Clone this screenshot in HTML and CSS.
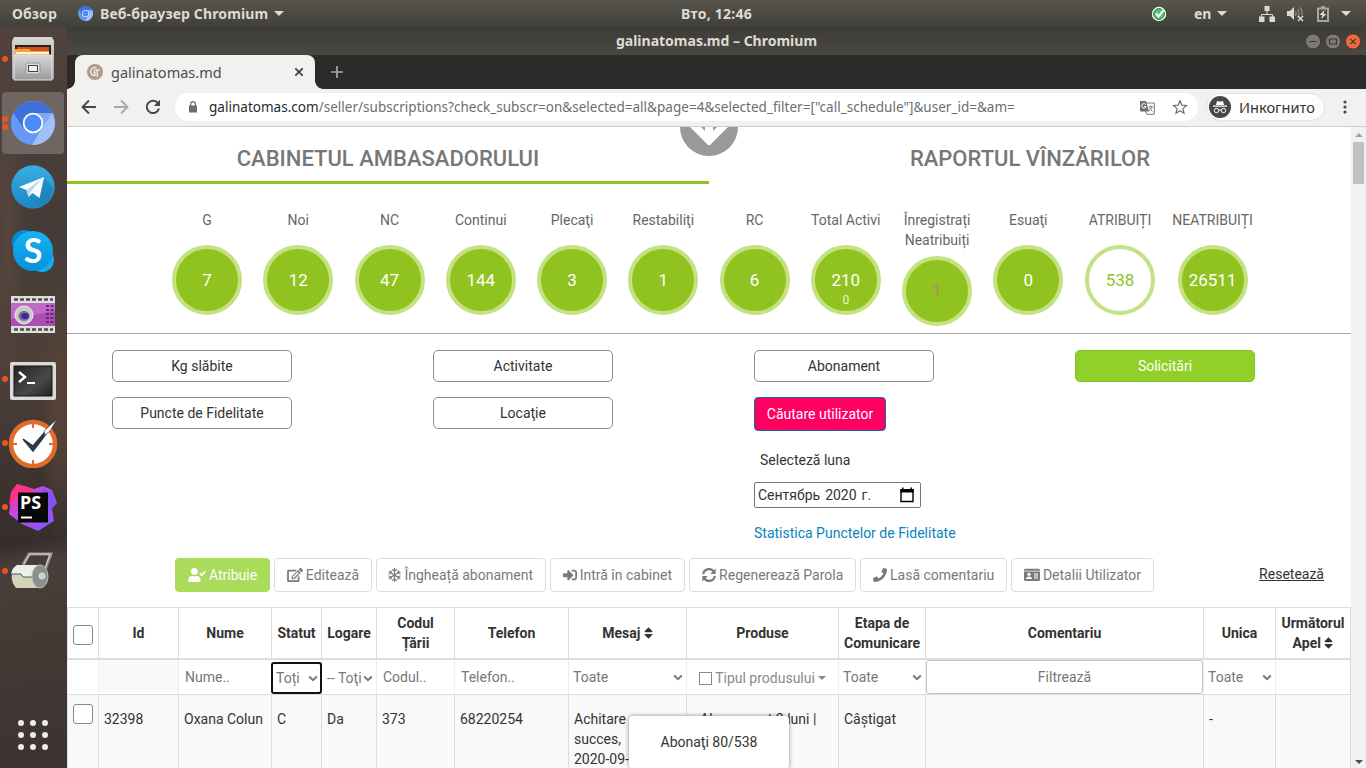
FILE: index.html
```html
<!DOCTYPE html>
<html lang="ro">
<head>
<meta charset="utf-8">
<title>galinatomas.md</title>
<link rel="stylesheet" href="styles.css">
</head>
<body>
<svg width="0" height="0" class="defs">
  <defs>
    <symbol id="chromium" viewBox="0 0 44 44">
      <circle cx="22" cy="22" r="22" fill="#6698f7"/>
      <path d="M2.500 12A22 22 0 0 1 41.500 12H22L12.500 27.500Z" fill="#3f6fd8"/>
      <path d="M41.500 12A22 22 0 0 1 21 44L31 27 32 12Z" fill="#9fc1fa"/>
      <path d="M22 12H41.500L31 27Z" fill="#7ea9f3"/>
      <circle cx="22" cy="22" r="10.300" fill="#fff"/>
      <circle cx="22" cy="22" r="8.500" fill="#4b8bf5"/>
    </symbol>
    <symbol id="sort" viewBox="0 0 320 512"><path fill="currentColor" d="M41 288h238c21.400 0 32.100 25.900 17 41L177 448c-9.400 9.400-24.600 9.400-33.900 0L24 329c-15.100-15.100-4.400-41 17-41zm255-105L177 64c-9.400-9.400-24.600-9.400-33.900 0L24 183c-15.100 15.100-4.400 41 17 41h238c21.400 0 32.100-25.900 17-41z"/></symbol>
    <symbol id="chev" viewBox="0 0 10 7"><path d="M1.200 1.500 5 5.200 8.800 1.500" fill="none" stroke="currentColor" stroke-width="2"/></symbol>
    <symbol id="tri" viewBox="0 0 10 5"><path d="M0 0H10L5 5Z" fill="currentColor"/></symbol>
    <linearGradient id="metal" x1="0" y1="0" x2="0" y2="1"><stop offset="0" stop-color="#d8d8d8"/><stop offset="1" stop-color="#9b9b9b"/></linearGradient>
    <linearGradient id="term" x1="0" y1="0" x2="1" y2="1"><stop offset="0" stop-color="#222"/><stop offset=".6" stop-color="#484848"/><stop offset="1" stop-color="#222"/></linearGradient>
    <linearGradient id="tele" x1="0" y1="0" x2="0" y2="1"><stop offset="0" stop-color="#37aee2"/><stop offset="1" stop-color="#1c87c3"/></linearGradient>
    <linearGradient id="sky" x1="0" y1="0" x2="0" y2="1"><stop offset="0" stop-color="#14b5f2"/><stop offset="1" stop-color="#0790dd"/></linearGradient>
    <linearGradient id="pst" x1="0" y1="0" x2="1" y2="1"><stop offset="0" stop-color="#ff318c"/><stop offset=".4" stop-color="#c04be8"/><stop offset="1" stop-color="#765af8"/></linearGradient>
  </defs>
</svg>

<header class="topbar">
  <span class="overview">Обзор</span>
  <svg class="app-icon" width="15" height="15"><use href="#chromium"/></svg>
  <span class="app-name">Веб-браузер Chromium</span>
  <svg class="app-arrow" width="10" height="5"><use href="#tri"/></svg>
  <span class="clock">Вто, 12:46</span>
  <div class="tray">
    <svg class="t-check" width="16" height="16" viewBox="0 0 16 16"><circle cx="8" cy="8" r="7.200" fill="#fff"/><circle cx="8" cy="8" r="5.400" fill="#4fc878" stroke="#257a43"/><path d="M5 7.500 7.500 10.500 12.500 4.500" fill="none" stroke="#fff" stroke-width="2"/></svg>
    <span class="lang">en</span>
    <svg class="t-lang" width="10" height="5"><use href="#tri"/></svg>
    <svg class="t-net" width="16" height="16" viewBox="0 0 16 16"><path d="M5.500 0h5v5h-5zM0 10.500h5.500V16H0zM10.500 10.500H16V16h-5.500z" fill="#dcd9d0"/><path d="M8 5v3.500M2.500 11V8.500h11V11" fill="none" stroke="#dcd9d0"/></svg>
    <svg class="t-vol" width="17" height="16" viewBox="0 0 17 16"><path d="M0 5h3l4-4v13l-4-4H0z" fill="#dcd9d0"/><path d="M8.500 5q1.500 2.500 0 5M10.500 3q3 4.500 0 9M13 1.500q3 4 2 8" fill="none" stroke="#8b8981" stroke-width="1.300"/><path d="m11 10 5 5m0-5-5 5" stroke="#dcd9d0" stroke-width="1.600"/></svg>
    <svg class="t-bat" width="12" height="16" viewBox="0 0 12 16"><path d="M1 2.500h10V15H1z" fill="none" stroke="#a8a59c" stroke-width="2"/><path d="M4 0h4v2H4z" fill="#a8a59c"/><path d="M7.500 4 2.500 9h3L4 13 9.500 8h-3z" fill="#e5e2da"/></svg>
    <svg width="10" height="5"><use href="#tri"/></svg>
  </div>
</header>

<div class="desk">
  <nav class="dock">
    <div class="slot run"><svg width="44" height="46" viewBox="0 0 44 46"><path d="M3 1h38l2 4v38H1V5Z" fill="url(#metal)"/><path d="M4 9h36v11H4z" fill="#222"/><path d="M6 11h32v9H6z" fill="#d2521c"/><path d="M4 13h14l2 2h18v6H4z" fill="#f7a13a"/><path d="M5 16h33v2H5z" fill="#fff2df"/><path d="M3 19h38v25H3z" fill="url(#metal)" stroke="#e4e4e4"/><rect x="15" y="27" width="14" height="11" rx="2" fill="#ddd" stroke="#999"/><rect x="17.500" y="29.500" width="9" height="6" fill="#eee" stroke="#444"/></svg></div>
    <div class="slot run twice active"><svg width="44" height="44"><use href="#chromium"/></svg></div>
    <div class="slot"><svg width="44" height="44" viewBox="0 0 44 44"><circle cx="22" cy="22" r="21.700" fill="url(#tele)"/><path d="m27 35 7-21 8 8A21 21 0 0 1 30 42L18 31Z" fill="#1878ad" opacity=".45"/><path d="M8 22 33 12 28.500 33 21.500 28 17.500 32 15.500 25Z" fill="#f7fbfe"/><path d="m15.500 25 15-11-11 13-2 5Z" fill="#bcd7e8"/></svg></div>
    <div class="slot"><svg width="44" height="44" viewBox="0 0 44 44"><circle cx="13" cy="13" r="12" fill="#0a8bd6"/><circle cx="31" cy="31" r="12" fill="#14aee9"/><circle cx="22" cy="22" r="20" fill="url(#sky)"/><text x="22" y="34" class="skype-s">S</text></svg></div>
    <div class="slot"><svg width="44" height="40" viewBox="0 0 44 40"><path d="M0 1h44v37H0z" fill="#dededb"/><path d="M0 8h44v23H0z" fill="#a950b1"/><path d="M0 8h44v8L0 24z" fill="#c06bc7"/><path d="M3 4.500h39M3 34.500h39" stroke="#4f4b48" stroke-width="2.500" stroke-dasharray="4 2"/><circle cx="13" cy="20" r="9" fill="#c9c9c9" stroke="#eee"/><ellipse cx="13" cy="21" rx="5.500" ry="5" fill="#777"/><ellipse cx="14" cy="21" rx="4" ry="3" fill="#4421b2"/><path d="M36.500 10v19M41 10v19" stroke="#70257a" stroke-width="3" stroke-dasharray="2 2"/></svg></div>
    <div class="slot run terminal"><svg width="46" height="38" viewBox="0 0 46 38"><rect width="46" height="38" rx="2" fill="#dadad8"/><path d="M4 4h38v30H4z" fill="url(#term)" stroke="#111"/><path d="m9 10 6 5-6 5" fill="none" stroke="#fff" stroke-width="2.500"/><path d="M17 21h8" stroke="#fff" stroke-width="2"/></svg></div>
    <div class="slot run"><svg width="50" height="50" viewBox="0 0 50 50"><circle cx="25" cy="26" r="22" fill="#fff" stroke="#df6c2b" stroke-width="4.500"/><path d="M25 6v4M25 42v4M5 26h4M41 26h4" stroke="#df6c2b" stroke-width="2"/><path d="m15 21 10 7L48 1 35 20 25 33Z" fill="#2d384a" stroke="#2d384a" stroke-width="1.500"/><path d="M36 13 49 1 42 13 37 17Z" fill="#fff" stroke="#333" stroke-width=".6"/></svg></div>
    <div class="slot run"><svg width="50" height="48" viewBox="0 0 50 48"><path d="M9 1 26 6 35 3 44 7 49 20 44 25 46 38 30 48 14 41 1 31 4 9Z" fill="url(#pst)"/><path d="M9 1 26 6 8 16 1 22 3 9Z" fill="#ff3186"/><path d="m34 5 10 4 4 12-9 10Z" fill="#8154ef"/><path d="M10 9.500h30v30H10z" fill="#080808"/><text x="12" y="25.500" class="ps-text">PS</text><path d="M13 34.500h11" stroke="#fff" stroke-width="2"/></svg></div>
    <div class="slot run"><svg width="46" height="40" viewBox="0 0 46 40"><path d="M13 14 19 3h22L33 24" fill="none" stroke="#8f9390" stroke-width="3"/><path d="M14 13 20 3h20L33 23" fill="none" stroke="#d7dad7"/><path d="M7 15h24v22H6Q-3 26 7 15Z" fill="#d4d4bd"/><path d="M7 14h24v12H13l-2-3H1Q2 17 7 14Z" fill="#eceeeb"/><path d="M1 23h10l2 3h13" fill="none" stroke="#555"/><ellipse cx="30" cy="25.500" rx="8" ry="11.500" fill="#8a8e8c" stroke="#b8bcb9"/><circle cx="32" cy="25" r="3.500" fill="#cfd2cf"/></svg></div>
    <div class="launcher"><i></i><i></i><i></i><i></i><i></i><i></i><i></i><i></i><i></i></div>
  </nav>

  <section class="window">
    <div class="titlebar">
      <span>galinatomas.md – Chromium</span>
      <div class="win-controls">
        <svg width="56" height="17" viewBox="0 0 56 17"><circle cx="8" cy="8.500" r="7.600" fill="#7c7a73" stroke="#393833"/><circle cx="28" cy="8.500" r="7.600" fill="#7c7a73" stroke="#393833"/><circle cx="48" cy="8.500" r="7.600" fill="#ec6a3e" stroke="#5a3022"/><path d="M4.500 8.500h7M24.500 6h7v5h-7zM45.300 5.800l5.400 5.400m0-5.400-5.400 5.400" fill="none" stroke="#3a3833" stroke-width="1.200"/></svg>
      </div>
    </div>
    <div class="tabs">
      <div class="tab">
        <svg width="16" height="16" viewBox="0 0 16 16"><circle cx="8" cy="8" r="8" fill="#b29a8c"/><path d="M9.500 4A4 4 0 1 0 8 11.500V8H6M7 6h6M10.200 6v7" fill="none" stroke="#fff" stroke-width="1.100"/></svg>
        <span>galinatomas.md</span>
        <svg class="close" width="10" height="10" viewBox="0 0 10 10"><path d="m1.300 1.300 7.400 7.400m0-7.400L1.300 8.700" stroke="#3d4043" stroke-width="1.700"/></svg>
      </div>
      <svg class="newtab" width="12" height="12" viewBox="0 0 12 12"><path d="M6 0v12M0 6h12" stroke="#a8a8a5" stroke-width="1.700"/></svg>
    </div>
    <div class="toolbar">
      <svg width="16" height="16" viewBox="0 0 16 16"><path d="M15 8H2M8 1.500 1.500 8 8 14.500" fill="none" stroke="#45474a" stroke-width="1.900"/></svg>
      <svg class="fwd" width="16" height="16" viewBox="0 0 16 16"><path d="M1 8h13M8 1.500 14.500 8 8 14.500" fill="none" stroke="#a9a9a8" stroke-width="1.900"/></svg>
      <svg class="reload" width="16" height="16" viewBox="0 0 16 16"><path d="M13 4.200A6.200 6.200 0 1 0 14 9.500" fill="none" stroke="#45474a" stroke-width="2"/><path d="M15 .8V7H8.800Z" fill="#45474a"/></svg>
      <div class="omnibox">
        <svg class="lock" width="8" height="12" viewBox="0 0 8 12"><path d="M0 4.500h8V11.500H0z" fill="#6a6d71"/><path d="M1.700 5V3a2.300 2.300 0 0 1 4.600 0v2" fill="none" stroke="#6a6d71" stroke-width="1.200"/></svg>
        <span class="url"><b>galinatomas.com</b>/seller/subscriptions?check_subscr=on&amp;selected=all&amp;page=4&amp;selected_filter=["call_schedule"]&amp;user_id=&amp;am=</span>
        <svg class="translate" width="15" height="15" viewBox="0 0 15 15"><path d="M6 3h8.300v11.300H7L5 11" fill="#fff" stroke="#77797c"/><path d="M0 1h6l3 10.500H1L0 11z" fill="#707174"/><path d="M5.800 4.700A2.200 2.200 0 1 0 6 6.600H4" fill="none" stroke="#fff"/><path d="M8.500 7H13M10.500 5.500V7M12 7q-1 3-3 4M9.500 8.500l3 3" fill="none" stroke="#77797c"/></svg>
        <svg class="star" width="16" height="16" viewBox="0 0 16 16"><path d="m8 1.800 1.800 4.300 4.700.4-3.600 3.100 1.100 4.600L8 11.800l-4 2.400 1.100-4.600L1.500 6.500l4.700-.4Z" fill="none" stroke="#6a6d71" stroke-width="1.200"/></svg>
      </div>
      <div class="incognito">
        <svg width="22" height="22" viewBox="0 0 22 22"><circle cx="11" cy="11" r="11" fill="#47484b"/><path d="M7 9 8 5q3 1 6 0l1 4zM4 9.500h14v1.200H4z" fill="#fff"/><circle cx="7.500" cy="14.500" r="2.200" fill="none" stroke="#fff"/><circle cx="14.500" cy="14.500" r="2.200" fill="none" stroke="#fff"/><path d="M9.700 14h2.600" stroke="#fff"/></svg>
        <span>Инкогнито</span>
      </div>
      <svg class="dots" width="4" height="14" viewBox="0 0 4 14"><g fill="#45474a"><circle cx="2" cy="2" r="1.600"/><circle cx="2" cy="7" r="1.600"/><circle cx="2" cy="12" r="1.600"/></g></svg>
    </div>

    <div class="viewport">
      <main class="page">
        <div class="cabinet-tabs"><h2 class="on">CABINETUL AMBASADORULUI</h2><h2>RAPORTUL VÎNZĂRILOR</h2></div>
        <svg class="scroll-down" width="58" height="29" viewBox="0 0 58 29"><circle cx="29" cy="0" r="29" fill="#999"/><path d="M10 0H21L25 4V0H33V4L37 0H48L30.500 17.500Q29 19 27.500 17.500Z" fill="#fff"/></svg>

        <div class="stats">
          <div class="stat"><span>G</span><b>7</b></div>
          <div class="stat"><span>Noi</span><b>12</b></div>
          <div class="stat"><span>NC</span><b>47</b></div>
          <div class="stat"><span>Continui</span><b>144</b></div>
          <div class="stat"><span>Plecaţi</span><b>3</b></div>
          <div class="stat"><span>Restabiliţi</span><b>1</b></div>
          <div class="stat"><span>RC</span><b>6</b></div>
          <div class="stat"><span>Total Activi</span><b>210<small>0</small></b></div>
          <div class="stat muted"><span>Înregistrați Neatribuiți</span><b>1</b></div>
          <div class="stat"><span>Esuaţi</span><b>0</b></div>
          <div class="stat hollow"><span>ATRIBUIȚI</span><b>538</b></div>
          <div class="stat"><span>NEATRIBUIȚI</span><b>26511</b></div>
        </div>

        <div class="filters">
          <div class="fcol"><a class="fbtn">Kg slăbite</a><a class="fbtn">Puncte de Fidelitate</a></div>
          <div class="fcol"><a class="fbtn">Activitate</a><a class="fbtn">Locaţie</a></div>
          <div class="fcol">
            <a class="fbtn">Abonament</a>
            <a class="search-user">Căutare utilizator</a>
            <label class="month-label">Selecteză luna</label>
            <div class="month"><span>Сентябрь</span><span>2020</span><span>г.</span><svg width="14" height="16" viewBox="0 0 14 16"><path d="M1 3h12v11.500H1z" fill="none" stroke="#000" stroke-width="1.400"/><path d="M.3 2h13.400v3.500H.3zM2 .5h1.500V3H2zM10.500.5H12V3h-1.500z"/></svg></div>
            <a class="stat-link">Statistica Punctelor de Fidelitate</a>
          </div>
          <div class="fcol"><a class="fbtn green">Solicitări</a></div>
        </div>

        <div class="actions">
          <a class="act primary w1"><svg width="18" height="14" viewBox="0 0 640 512"><path fill="currentColor" d="M224 256c70.700 0 128-57.300 128-128S294.700 0 224 0 96 57.300 96 128s57.300 128 128 128zm89.600 32h-16.700c-22.200 10.200-46.900 16-72.900 16s-50.600-5.800-72.900-16h-16.700C60.200 288 0 348.200 0 422.400V464c0 26.500 21.500 48 48 48h352c26.500 0 48-21.500 48-48v-41.600c0-74.200-60.200-134.400-134.400-134.400z"/><path d="m420 190 70 75 135-140" fill="none" stroke="currentColor" stroke-width="62"/></svg>Atribuie</a>
          <a class="act w2"><svg width="16" height="14" viewBox="0 0 576 512"><path fill="currentColor" d="M402.600 83.200l90.200 90.200c3.800 3.800 3.800 10 0 13.800L274.400 405.600l-92.800 10.300c-12.400 1.400-22.900-9.100-21.500-21.500l10.300-92.800L388.800 83.200c3.800-3.800 10-3.800 13.800 0zm162-22.900l-48.800-48.800c-15.200-15.200-39.900-15.200-55.200 0l-35.400 35.400c-3.800 3.800-3.800 10 0 13.800l90.200 90.200c3.800 3.800 10 3.800 13.800 0l35.400-35.400c15.200-15.300 15.200-40 0-55.200zM384 346.200V448H64V128h229.800c3.200 0 6.200-1.300 8.500-3.500l40-40c7.600-7.600 2.200-20.500-8.500-20.500H48C21.500 64 0 85.500 0 112v352c0 26.500 21.500 48 48 48h352c26.500 0 48-21.500 48-48V306.200c0-10.700-12.900-16-20.500-8.500l-40 40c-2.200 2.300-3.500 5.300-3.500 8.500z"/><path d="M215 355 405 165" stroke="#fff" stroke-width="62"/></svg>Editează</a>
          <a class="act w3"><svg width="13" height="14" viewBox="0 0 13 14"><path d="M6.500 0v14M.7 3.500l11.600 7M12.300 3.500l-11.600 7M4.300 1.200l2.200 2 2.200-2M4.300 12.800l2.200-2 2.200 2M.5 6l2.800-.8L2.700 2.300M12.500 6l-2.800-.8.600-2.900M.5 8l2.800.8-.6 2.900M12.500 8l-2.800.8.600 2.900" fill="none" stroke="currentColor" stroke-width="1.150"/></svg>Îngheață abonament</a>
          <a class="act w4"><svg width="14" height="14" viewBox="0 0 512 512"><path fill="currentColor" d="M416 448h-84c-6.600 0-12-5.400-12-12v-40c0-6.600 5.400-12 12-12h84c17.700 0 32-14.300 32-32V160c0-17.700-14.300-32-32-32h-84c-6.600 0-12-5.400-12-12V76c0-6.600 5.400-12 12-12h84c53 0 96 43 96 96v192c0 53-43 96-96 96zm-47-201L201 79c-15-15-41-4.500-41 17v96H24c-13.300 0-24 10.700-24 24v96c0 13.300 10.700 24 24 24h136v96c0 21.500 26 32 41 17l168-168c9.300-9.400 9.300-24.600 0-34z"/></svg>Intră în cabinet</a>
          <a class="act w5"><svg width="14" height="14" viewBox="0 0 14 14"><path d="M1.200 6.200A5.800 5.800 0 0 1 11.500 3.300M12.800 7.800A5.800 5.800 0 0 1 2.500 10.700" fill="none" stroke="currentColor" stroke-width="2.200"/><path d="M13.700.5V6H8.200ZM.3 13.500V8h5.500Z" fill="currentColor"/></svg>Regenerează Parola</a>
          <a class="act w6"><svg width="14" height="14" viewBox="0 0 512 512"><path fill="currentColor" d="M493.400 24.600l-104-24c-11.300-2.600-22.900 3.300-27.500 13.900l-48 112c-4.200 9.800-1.400 21.300 6.900 28l60.600 49.600c-36 76.700-98.900 140.500-177.200 177.200l-49.600-60.600c-6.800-8.300-18.200-11.100-28-6.900l-112 48C3.900 366.500-2 378.100.6 389.400l24 104C27.100 504.200 36.700 512 48 512c256.100 0 464-207.500 464-464 0-11.200-7.700-20.900-18.600-23.400z"/></svg>Lasă comentariu</a>
          <a class="act w7"><svg width="16" height="14" viewBox="0 0 16 14"><path fill="currentColor" d="M1 .8h14l1 1v.9H0v-.9zM0 3.600h16V12l-1 1H1l-1-1z"/><circle cx="5" cy="6.300" r="1.600" fill="#fff"/><path d="M2 11q0-2.500 3-2.500T8 11zM10 5.500h4v1h-4zM10 7.500h4v1h-4zM10 9.500h4v1h-4z" fill="#fff"/></svg>Detalii Utilizator</a>
          <a class="reset">Resetează</a>
        </div>

        <div class="grid head">
          <div><i class="cb"></i></div><div>Id</div><div>Nume</div><div>Statut</div><div>Logare</div><div>Codul<br>Țării</div><div>Telefon</div><div><span>Mesaj <svg width="9" height="14"><use href="#sort"/></svg></span></div><div>Produse</div><div>Etapa de<br>Comunicare</div><div>Comentariu</div><div>Unica</div><div><span>Următorul<br>Apel <svg width="9" height="14"><use href="#sort"/></svg></span></div>
        </div>
        <div class="grid filter">
          <div></div><div class="dim"></div><div class="inp">Nume..</div>
          <div class="sel focus"><span>Toți</span><svg width="10" height="7"><use href="#chev"/></svg></div>
          <div class="sel log"><span>-- Toţi</span><svg width="10" height="7"><use href="#chev"/></svg></div>
          <div class="inp">Codul..</div><div class="inp">Telefon..</div>
          <div class="sel"><span>Toate</span><svg width="10" height="7"><use href="#chev"/></svg></div>
          <div class="type"><i></i>Tipul produsului<svg width="8" height="4"><use href="#tri"/></svg></div>
          <div class="sel"><span>Toate</span><svg width="10" height="7"><use href="#chev"/></svg></div>
          <div class="comm"><span>Filtrează</span></div>
          <div class="sel"><span>Toate</span><svg width="10" height="7"><use href="#chev"/></svg></div>
          <div></div>
        </div>
        <div class="grid row">
          <div><i class="cb"></i></div><div>32398</div><div>Oxana Colun</div><div>C</div><div>Da</div><div>373</div><div>68220254</div><div>Achitare<br>succes,<br>2020-09-</div><div class="prod">Abonament 2 luni |</div><div>Câștigat</div><div></div><div>-</div><div></div>
        </div>
        <div class="toast">Abonaţi 80/538</div>
      </main>
      <div class="scrollbar"><svg width="8" height="4" viewBox="0 0 8 4"><path d="M0 4h8L4 0z" fill="#a3a3a3"/></svg><i></i><svg class="down" width="8" height="4" viewBox="0 0 8 4"><path d="M0 0h8L4 4z" fill="#505050"/></svg></div>
    </div>
  </section>
</div>
</body>
</html>
```
FILE: styles.css
```css
* { box-sizing: border-box; }
body { margin: 0; width: 1366px; height: 768px; overflow: hidden; font: 14px/20px Roboto, sans-serif; color: #333; background: #fff; }
svg { display: block; flex: none; }
.defs { position: absolute; }

/* system bar */
.topbar { position: relative; height: 27px; display: flex; align-items: center; padding-left: 12px; background: linear-gradient(#58554c, #403f3a); color: #dfdbd2; font: bold 14px/27px "Noto Sans", sans-serif; white-space: nowrap; }
.overview { width: 66px; letter-spacing: .1px; }
.app-icon { margin-right: 7px; }
.app-name { width: 168px; letter-spacing: .12px; }
.app-arrow { margin-left: 6px; }
.clock { position: absolute; left: 681px; top: 0; font-size: 14px; letter-spacing: .25px; }
.tray { margin-left: auto; display: flex; align-items: center; padding-right: 15px; }
.t-check { margin-right: 27px; }
.lang { width: 17px; }
.t-lang { margin: 0 31px 0 6px; }
.t-net { margin-right: 12px; }
.t-vol { margin-right: 13px; }
.t-bat { margin-right: 12px; }
.topbar .t-lang { margin-right: 32px; }

.desk { display: flex; height: 741px; }

/* dock */
.dock { width: 67px; flex: none; padding: 1px 3px 0 2px; background: radial-gradient(ellipse at 90% 52%, #594437 0, transparent 25%), radial-gradient(ellipse at 10% 28%, #57463f 0, transparent 22%), linear-gradient(170deg, #51423d 0, #453b37 28%, #4d4039 45%, #3a322f 62%, #362e2b 69%, #4a3e3a 72%, #443835 85%, #3c3330 100%); }
.slot { position: relative; height: 62px; margin-bottom: 2px; border-radius: 4px; display: flex; align-items: center; justify-content: center; }
.slot.active { background: #706661; }
.slot.terminal { padding-top: 3px; }
.slot.run::before { content: ""; position: absolute; left: 0; top: 28px; width: 6px; height: 6px; border-radius: 50%; background: #e95420; }
.slot.twice::before { top: 24px; box-shadow: 0 8px #e95420; }
.skype-s { font: bold 34px Lato, sans-serif; fill: #fff; text-anchor: middle; }
.ps-text { font: bold 18px "Noto Sans", sans-serif; fill: #fff; }
.launcher { width: 30px; margin: 118px auto 0; display: grid; grid-template-columns: repeat(3, 6px); gap: 6px; }
.launcher i { width: 6px; height: 6px; border-radius: 50%; background: #eeeceb; }

/* browser chrome */
.window { width: 1299px; flex: none; display: flex; flex-direction: column; background: #fff; }
.titlebar { position: relative; height: 28px; background: linear-gradient(#3d3c37, #4a4842); color: #dfdbd2; text-align: center; font: bold 14px/28px "Noto Sans", sans-serif; }
.win-controls { position: absolute; right: 5px; top: 6px; width: 56px; }
.tabs { height: 34px; display: flex; align-items: center; background: #2b2b29; padding-left: 8px; }
.tab { position: relative; width: 240px; height: 34px; display: flex; align-items: center; padding: 0 11px 0 12px; border-radius: 8px 8px 0 0; background: #f2f1f0; color: #4c4c4c; font: 14.500px/18px "Noto Sans", sans-serif; }
.tab::before, .tab::after { content: ""; position: absolute; bottom: 0; width: 8px; height: 8px; }
.tab::before { left: -8px; background: radial-gradient(circle at 0 0, transparent 7.500px, #f2f1f0 8px); }
.tab::after { right: -8px; background: radial-gradient(circle at 100% 0, transparent 7.500px, #f2f1f0 8px); }
.tab span { margin: -1px 0 0 8px; }
.close { margin-left: auto; }
.newtab { margin-left: 16px; }
.toolbar { height: 38px; display: flex; align-items: center; padding: 0 19px 1px 14px; background: #f2f1f0; border-bottom: 1px solid #cfcecd; }
.fwd { margin-left: 16px; }
.reload { margin: 0 14px 0 16px; }
.omnibox { width: 1023px; height: 28px; flex: none; display: flex; align-items: center; padding: 0 10px 0 14px; background: #fff; border-radius: 14px; font: 13.500px "Noto Sans", sans-serif; }
.url { margin-left: 12px; color: #6b6e72; white-space: nowrap; letter-spacing: .02px; }
.url b { font-weight: 400; color: #292a2d; }
.translate { margin-left: auto; }
.star { margin-left: 17px; }
.incognito { width: 119px; height: 28px; flex: none; margin-left: 8px; display: flex; align-items: center; padding-left: 2px; border: 1px solid #e2e1df; border-radius: 14px; background: #fdfdfc; font: 14.600px "Noto Sans", sans-serif; color: #333; }
.incognito span { margin-left: 8px; }
.dots { margin-left: auto; }

.viewport { display: flex; height: 641px; }
.page { position: relative; width: 1284px; flex: none; overflow: hidden; }
.scrollbar { position: relative; width: 15px; background: #f1f1f1; display: flex; flex-direction: column; align-items: center; padding: 6px 0 4px; }
.scrollbar i { width: 11px; height: 42px; margin-top: 5px; background: #c1c1c1; }
.scrollbar .down { margin-top: auto; }

/* heading tabs */
.cabinet-tabs { display: flex; height: 57px; }
.cabinet-tabs h2 { width: 642px; margin: 0; text-align: center; font-size: 22px; line-height: 64px; font-weight: 500; color: #777; }
.cabinet-tabs .on { border-bottom: 3px solid #90c31f; }
.scroll-down { position: absolute; left: 613px; top: 0; }

.stats { display: grid; grid-template-columns: repeat(10, 91.250px) 92.200px 93px; padding: 26px 0 0 94.400px; height: 150px; border-bottom: 1px solid #a6a6a6; }
.stat { display: flex; flex-direction: column; align-items: center; color: #666; text-align: center; }
.stat span { min-height: 29px; margin-bottom: 6px; max-width: 90px; }
.stat b { position: relative; width: 70px; height: 70px; border-radius: 50%; border: 4px solid #c4e282; background: #90c31f; color: #fff; font: 17px/62px Roboto, sans-serif; }
.stat small { position: absolute; left: 0; right: 0; top: 39px; font-size: 12px; line-height: 24px; color: #e8f3cf; }
.stat.muted b { color: #ad8b5f; }
.stat.hollow b { background: #fff; color: #90c31f; }

.filters { display: grid; grid-template-columns: repeat(4, 321px); padding: 16px 0 0 45px; height: 224px; width: 1400px; }
.fcol { display: flex; flex-direction: column; align-items: flex-start; }
.fbtn { width: 180px; height: 32px; margin-bottom: 15px; border: 1px solid #8c8c8c; border-radius: 5px; text-align: center; line-height: 30px; }
.fbtn.green { background: #90d029; border-color: #7fc41c; color: #fff; }
.search-user { width: 132px; height: 34px; border: 1px solid #0c70a5; border-radius: 4px; background: #ff0060; color: #fff; text-align: center; line-height: 32px; }
.month-label { margin: 19px 0 12px 6px; }
.month { width: 167px; height: 26px; display: flex; align-items: center; gap: 5px; padding: 0 6px 0 3px; border: 1px solid #767676; border-radius: 2px; white-space: nowrap; }
.month svg { margin-left: auto; }
.stat-link { margin-top: 15px; color: #0a84bf; }

.actions { display: flex; gap: 4px; padding: 0 27px 0 108px; height: 49px; }
.act { height: 34px; display: flex; align-items: center; justify-content: center; gap: 3px; border: 1px solid #ddd; border-radius: 4px; color: #7a7a7a; white-space: nowrap; }
.act.primary { background: #aadb5a; border-color: #aadb5a; color: #fff; }
.w1 { width: 95px; }
.w2 { width: 98px; }
.w3 { width: 169.500px; }
.w4 { width: 135.700px; }
.w5 { width: 167px; }
.w6 { width: 147px; }
.w7 { width: 142.600px; }
.reset { margin: 6px 0 0 auto; text-decoration: underline; }

/* table */
.grid { display: grid; grid-template-columns: 31px 80px 93px 50px 55px 78px 114px 118px 152px 87px 278px 72px 76px; }
.grid > div { border-left: 1px solid #ddd; }
.grid > div:last-child { border-right: 1px solid #ddd; }
.cb { display: block; width: 20px; height: 20px; border: 1px solid #8a8a8a; border-radius: 3px; background: #fff; }
.head { height: 53px; border-top: 1px solid #ddd; border-bottom: 2px solid #ddd; text-align: center; font-weight: 700; }
.head > div { display: flex; align-items: center; justify-content: center; }
.head .cb { margin-top: 4px; }
.head svg { display: inline-block; vertical-align: -2px; }
.filter { height: 35px; border-bottom: 1px solid #ddd; color: #777; }
.filter > div { display: flex; align-items: center; white-space: nowrap; border-left-color: #eee; }
.filter > .dim { background: #f9f9f9; height: 32px; }
.inp { padding-left: 6px; }
.sel { justify-content: space-between; padding: 0 3px 0 4px; }
.filter .focus { margin: 2px -1px 0 0; border: 2px solid #111; border-radius: 3px; padding: 0 2px 0 3px; position: relative; }
.filter .log { padding: 2px 3px 0 5px; }
.filter .type { justify-content: center; color: #8a8a8a; padding-top: 2px; }
.type i { width: 13px; height: 13px; border: 1px solid #8a8a8a; margin-right: 3px; }
.type svg { margin-left: 3px; }
.comm span { width: 277px; height: 34px; line-height: 32px; border: 1px solid #c4c4c4; border-radius: 3px; text-align: center; background: #fff; }
.row { height: 80px; background: #f9f9f9; }
.row > div { padding: 14px 0 0 5px; white-space: nowrap; }
.row > div:first-child { padding: 9px 0 0 5px; }
.row .prod { padding-left: 13px; }
.toast { position: absolute; left: 562px; top: 589px; width: 160px; height: 53px; background: #fff; border-radius: 4px; box-shadow: 0 0 4px rgba(0, 0, 0, .45); text-align: center; line-height: 52px; }
```
